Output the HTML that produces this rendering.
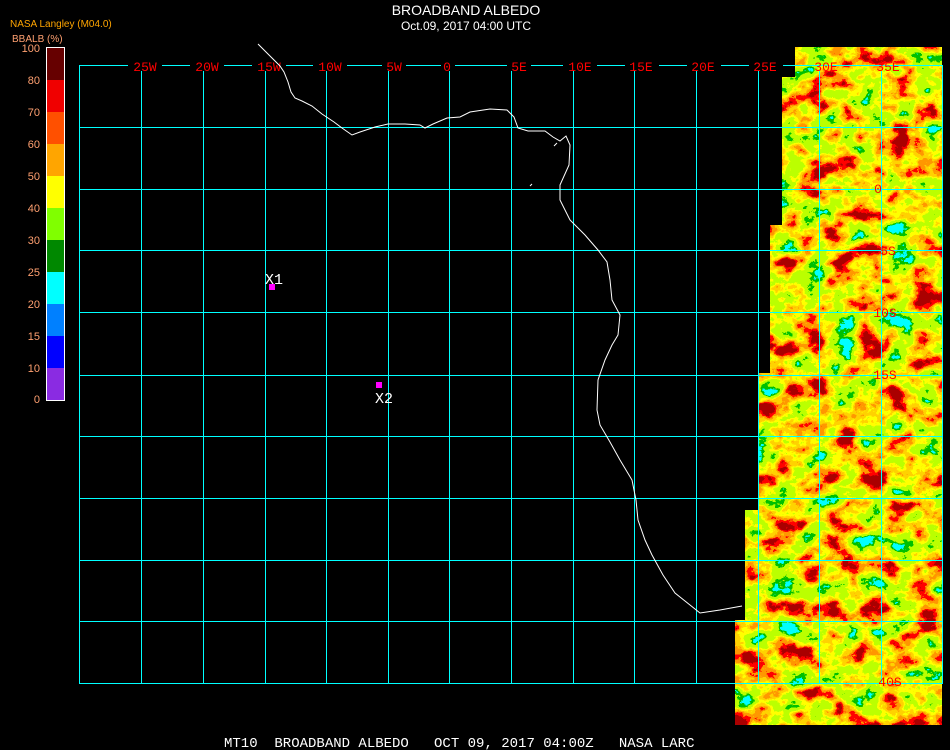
<!DOCTYPE html>
<html><head><meta charset="utf-8"><style>
html,body{margin:0;padding:0;background:#000;width:950px;height:750px;overflow:hidden}
svg{display:block}
text{font-family:"Liberation Sans",sans-serif}
.m{font-family:"Liberation Mono",monospace}
</style></head><body>
<svg width="950" height="750" viewBox="0 0 950 750" xmlns="http://www.w3.org/2000/svg">
<defs>
<filter id="n" x="0" y="0" width="100%" height="100%" filterUnits="userSpaceOnUse">
<feTurbulence type="fractalNoise" baseFrequency="0.035 0.045" numOctaves="6" seed="11" result="t"/>
<feColorMatrix in="t" type="matrix" values="1.8 0 0 0 -0.42  1.8 0 0 0 -0.42  1.8 0 0 0 -0.42  0 0 0 0 1"/>
<feComponentTransfer>
<feFuncR type="discrete" tableValues="0.4 0.4 1 1 1 1 1 1 1 1 0.5 0.5 0.5 0.5 0 0 0"/>
<feFuncG type="discrete" tableValues="0 0 0 0 0.31 0.31 0.65 0.65 1 1 1 1 1 1 0.53 0.53 1"/>
<feFuncB type="discrete" tableValues="0 0 0 0 0 0 0 0 0 0 0 0 0 0 0 0 1"/>
<feFuncA type="linear" slope="0" intercept="1"/>
</feComponentTransfer>
</filter>
<clipPath id="c"><polygon points="795,47 942,47 942,725 735,725 735,620 745,620 745,510 758,510 758,373 770,373 770,225 782,225 782,77 795,77"/></clipPath>
</defs>
<g clip-path="url(#c)"><rect x="700" y="40" width="250" height="700" filter="url(#n)"/></g>

<text x="466" y="15" fill="#fff" font-size="14" text-anchor="middle">BROADBAND ALBEDO</text>
<text x="466" y="30" fill="#fff" font-size="12" text-anchor="middle">Oct.09, 2017 04:00 UTC</text>
<text x="10" y="27" fill="#ffa500" font-size="10">NASA Langley (M04.0)</text>
<text x="12" y="42" fill="#ffa070" font-size="10">BBALB (%)</text>

<g>
<rect x="46" y="48" width="18" height="32" fill="#660000"/>
<rect x="46" y="80" width="18" height="32" fill="#f00000"/>
<rect x="46" y="112" width="18" height="32" fill="#ff5000"/>
<rect x="46" y="144" width="18" height="32" fill="#ffa500"/>
<rect x="46" y="176" width="18" height="32" fill="#ffff00"/>
<rect x="46" y="208" width="18" height="32" fill="#80ff00"/>
<rect x="46" y="240" width="18" height="32" fill="#008800"/>
<rect x="46" y="272" width="18" height="32" fill="#00ffff"/>
<rect x="46" y="304" width="18" height="32" fill="#0080ff"/>
<rect x="46" y="336" width="18" height="32" fill="#0000ff"/>
<rect x="46" y="368" width="18" height="32" fill="#8a2be2"/>
</g>
<rect x="46.5" y="47.5" width="18" height="353" fill="none" stroke="#fff" stroke-width="1"/>
<g fill="#ffa070" font-size="11" text-anchor="end">
<text x="40" y="52">100</text><text x="40" y="84">80</text><text x="40" y="116">70</text>
<text x="40" y="148">60</text><text x="40" y="180">50</text><text x="40" y="212">40</text>
<text x="40" y="244">30</text><text x="40" y="276">25</text><text x="40" y="308">20</text>
<text x="40" y="340">15</text><text x="40" y="372">10</text><text x="40" y="403">0</text>
</g>

<g fill="#00ffff">
<rect x="79" y="65" width="864" height="1"/>
<rect x="79" y="683" width="864" height="1"/>
<rect x="79" y="65" width="1" height="619"/>
<rect x="942" y="65" width="1" height="619"/>
<rect x="141" y="71" width="1" height="612"/><rect x="203" y="71" width="1" height="612"/>
<rect x="265" y="71" width="1" height="612"/><rect x="326" y="71" width="1" height="612"/>
<rect x="388" y="71" width="1" height="612"/><rect x="449" y="71" width="1" height="612"/>
<rect x="511" y="71" width="1" height="612"/><rect x="573" y="71" width="1" height="612"/>
<rect x="634" y="71" width="1" height="612"/><rect x="696" y="71" width="1" height="612"/>
<rect x="758" y="71" width="1" height="612"/><rect x="819" y="71" width="1" height="612"/>
<rect x="881" y="71" width="1" height="612"/>
<rect x="80" y="127" width="863" height="1"/><rect x="80" y="189" width="863" height="1"/>
<rect x="80" y="250" width="863" height="1"/><rect x="80" y="312" width="863" height="1"/>
<rect x="80" y="375" width="863" height="1"/><rect x="80" y="436" width="863" height="1"/>
<rect x="80" y="498" width="863" height="1"/><rect x="80" y="560" width="863" height="1"/>
<rect x="80" y="621" width="863" height="1"/>
</g>
<g fill="#000">
<rect x="128" y="60" width="34" height="10"/><rect x="190" y="60" width="34" height="10"/>
<rect x="252" y="60" width="34" height="10"/><rect x="313" y="60" width="34" height="10"/>
<rect x="382" y="60" width="24" height="10"/><rect x="441" y="60" width="14" height="10"/>
<rect x="507" y="60" width="24" height="10"/><rect x="563" y="60" width="34" height="10"/>
<rect x="625" y="60" width="34" height="10"/><rect x="687" y="60" width="34" height="10"/>
<rect x="749" y="60" width="34" height="10"/>
</g>
<g fill="#ff0000" font-size="13" text-anchor="middle">
<text x="145" y="71" class="m">25W</text><text x="207" y="71" class="m">20W</text>
<text x="269" y="71" class="m">15W</text><text x="330" y="71" class="m">10W</text>
<text x="394" y="71" class="m">5W</text><text x="447" y="71" class="m">0</text>
<text x="519" y="71" class="m">5E</text><text x="580" y="71" class="m">10E</text>
<text x="641" y="71" class="m">15E</text><text x="703" y="71" class="m">20E</text>
<text x="765" y="71" class="m">25E</text><text x="826" y="71" class="m">30E</text>
<text x="888" y="71" class="m">35E</text>
<text x="878" y="193" class="m">0</text><text x="888" y="255" class="m">5S</text>
<text x="885" y="317" class="m">10S</text><text x="885" y="379" class="m">15S</text>
<text x="890" y="686" class="m">40S</text>
</g>

<path fill="none" stroke="#fff" stroke-width="1" d="M258,44 L262,48 L270,56 L280,66 L284,72 L288,82 L291,92 L295,98 L302,101 L312,106 L322,114 L334,122 L342,128 L352,135 L360,132 L375,127 L388,124 L405,124 L420,125 L425,128 L433,124 L447,118 L460,117 L470,112 L490,109 L507,110 L514,117 L518,128 L528,131 L545,131 L553,137 L560,141 L566,136 L570,145 L569,165 L560,185 L560,200 L570,220 L585,235 L598,250 L607,262 L610,280 L612,300 L620,315 L618,335 L612,345 L605,360 L598,380 L597,410 L600,425 L610,442 L620,460 L632,480 L636,500 L638,520 L645,540 L652,555 L663,575 L675,593 L690,605 L700,613 L720,610 L742,606"/>
<path fill="none" stroke="#fff" stroke-width="1" d="M554,146 l3,-3 M530,186 l2,-2"/>

<rect x="269" y="284" width="6" height="6" fill="#ff00ff"/>
<text x="265" y="284" fill="#fff" font-size="15" class="m">X1</text>
<rect x="376" y="382" width="6" height="6" fill="#ff00ff"/>
<text x="375" y="403" fill="#fff" font-size="15" class="m">X2</text>

<text x="224" y="747" fill="#fff" font-size="14" class="m" xml:space="preserve">MT10  BROADBAND ALBEDO   OCT 09, 2017 04:00Z   NASA LARC</text>
</svg>
</body></html>
